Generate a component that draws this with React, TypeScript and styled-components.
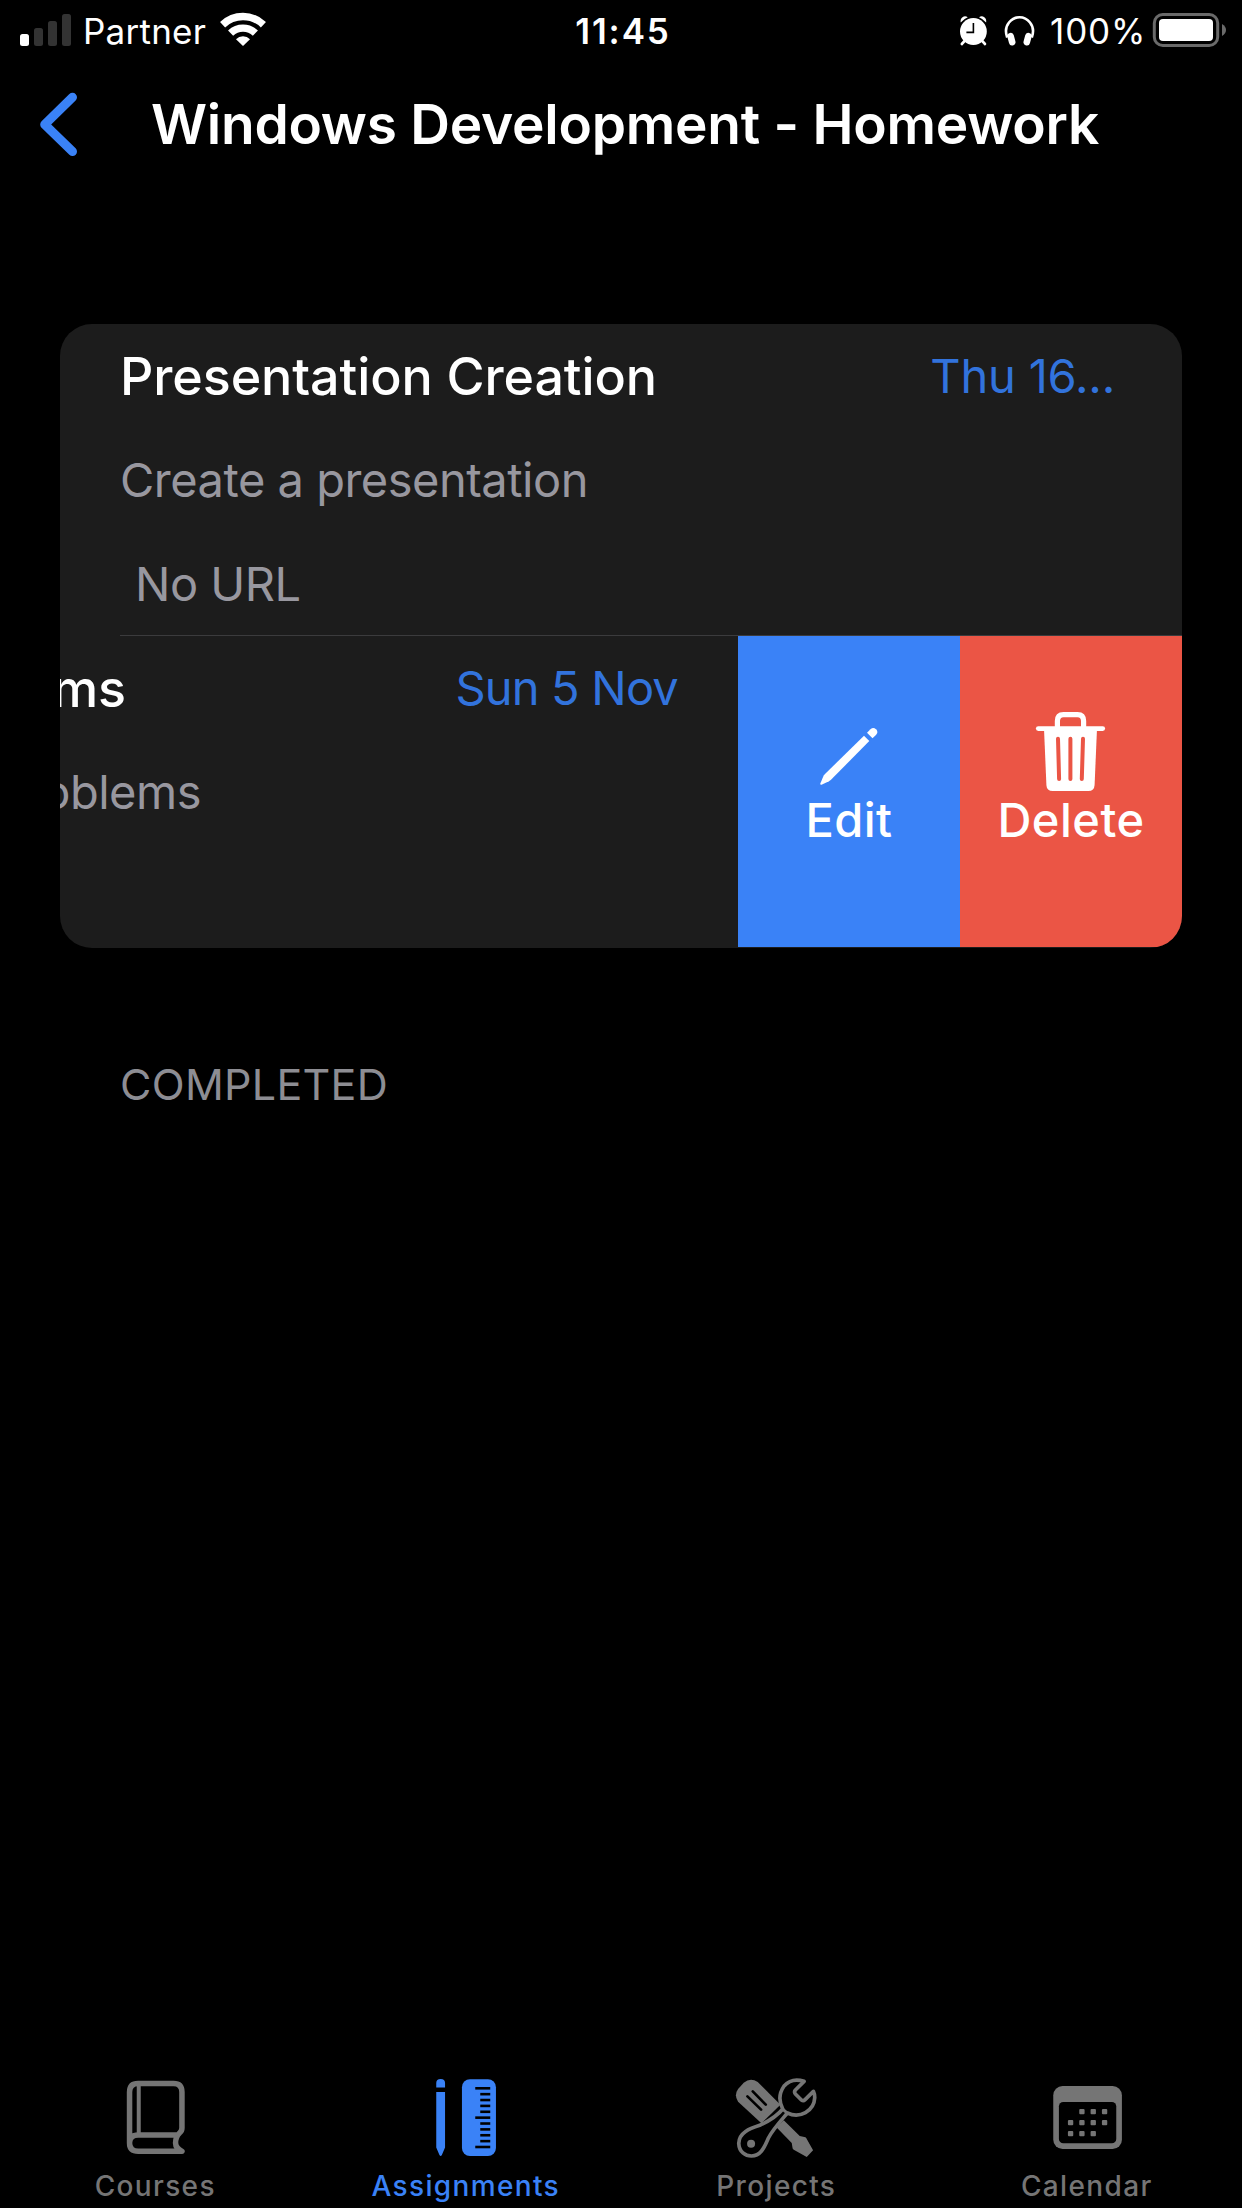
import React from "react";
import styled, { createGlobalStyle } from "styled-components";

const color = {
  blue: "#3a82f7",
  date: "#3273dc",
  red: "#eb5545",
  card: "#1c1c1c",
  line: "#3b3b3d",
  secondary: "#98979f",
  header: "#8d8d93",
  tab: "#757575",
};

const Global = createGlobalStyle`
  * { box-sizing: border-box; }
  html, body { margin: 0; background: #000; }
  body { font-family: Inter, "Liberation Sans", sans-serif; color: #fff; }
  svg { display: block; flex: none; }
`;

const Screen = styled.div`
  width: 1242px;
  height: 2208px;
  background: #000;
  display: flex;
  flex-direction: column;
  overflow: hidden;
`;

const StatusBar = styled.header`
  height: 62px;
  padding: 0 16px 0 20px;
  display: grid;
  grid-template-columns: 1fr 110px 1fr;
  font-size: 35px;
  line-height: 62px;
  white-space: nowrap;
`;

const StatusSide = styled.div<{ $end?: boolean }>`
  display: flex;
  justify-content: ${(p) => (p.$end ? "flex-end" : "flex-start")};
`;

const Carrier = styled.span`
  width: 136px;
  margin-left: 9px;
  letter-spacing: 0.25px;
`;

const Clock = styled.span`
  font-weight: 600;
  text-align: center;
  letter-spacing: 1.9px;
`;

const AlarmSlot = styled.span`
  display: flex;
  margin-right: 15px;
`;

const Percent = styled.span`
  width: 102px;
  margin-left: 14px;
  letter-spacing: 0.9px;
`;

const NavBar = styled.nav`
  height: 124px;
  padding-left: 34px;
  display: flex;
  align-items: center;
`;

const NavTitle = styled.h1`
  margin: 0 0 0 67px;
  font-size: 55px;
  line-height: 124px;
  font-weight: 600;
  letter-spacing: -0.25px;
  font-feature-settings: "calt" 0;
  white-space: nowrap;
`;

const Card = styled.section`
  margin: 138px 60px 0;
  height: 624px;
  border-radius: 32px;
  background: ${color.card};
  overflow: hidden;
`;

const Row = styled.article`
  height: 312px;
  padding: 0 67px 0 60px;
  display: grid;
  grid-template-rows: 104px 104px 104px;
  white-space: nowrap;
`;

const Divider = styled.div`
  height: 1px;
  margin-top: -1px;
  margin-left: 60px;
  background: ${color.line};
`;

const SwipedRow = styled.div`
  height: 312px;
  display: flex;
`;

const SwipedContent = styled.article`
  width: 678px;
  padding-right: 60px;
  display: grid;
  grid-template-rows: 104px 104px 104px;
  white-space: nowrap;
`;

const RowHead = styled.div`
  display: flex;
  justify-content: space-between;
`;

/* Holds the trailing end of a text whose start has slid past the card edge. */
const Clipped = styled.div<{ $width: number }>`
  width: ${(p) => p.$width}px;
  display: flex;
  justify-content: flex-end;
  overflow: hidden;
`;

const ItemTitle = styled.h2`
  margin: 0;
  font-size: 52px;
  line-height: 105px;
  font-weight: 500;
  letter-spacing: -0.1px;
`;

const ItemDate = styled.span<{ $tracking: number }>`
  font-size: 47px;
  line-height: 104px;
  letter-spacing: ${(p) => p.$tracking}px;
  color: ${color.date};
`;

const ItemText = styled.p<{ $indent?: number }>`
  margin: 0;
  padding-left: ${(p) => p.$indent ?? 0}px;
  font-size: 47px;
  line-height: 104px;
  letter-spacing: -0.5px;
  color: ${color.secondary};
`;

const Action = styled.button<{ $bg: string }>`
  width: 222px;
  height: 311px;
  padding: 76px 0 0;
  border: 0;
  background: ${(p) => p.$bg};
  color: #fff;
  font: 500 47px/56px Inter, "Liberation Sans", sans-serif;
  letter-spacing: 0.5px;
  display: flex;
  flex-direction: column;
  align-items: center;
`;

const SectionHeader = styled.h3`
  margin: 104px 0 0 120px;
  font-size: 43px;
  line-height: 64px;
  font-weight: 400;
  letter-spacing: 0.3px;
  color: ${color.header};
`;

const TabBar = styled.footer`
  margin-top: auto;
  height: 140px;
  padding-bottom: 4px;
  display: grid;
  grid-template-columns: repeat(4, 1fr);
`;

const Tab = styled.a<{ $active?: boolean }>`
  display: flex;
  flex-direction: column;
  align-items: center;
  font-size: 28px;
  line-height: 36px;
  font-weight: 500;
  letter-spacing: 1.35px;
  color: ${(p) => (p.$active ? color.blue : color.tab)};
`;

const Signal = () => (
  <svg width="54" height="62" viewBox="20 0 54 62">
    <rect x="20" y="34" width="9" height="12" rx="2.5" fill="#fff" />
    <rect x="34" y="28" width="9" height="18" rx="2.5" fill="#333" />
    <rect x="48" y="21" width="9" height="25" rx="2.5" fill="#333" />
    <rect x="62" y="14" width="9" height="32" rx="2.5" fill="#333" />
  </svg>
);

const Wifi = () => (
  <svg width="48" height="62" viewBox="219 0 48 62" fill="none" stroke="#fff" strokeWidth="7.4">
    <path d="M222.6 24.7A29.6 29.6 0 0 1 263.4 24.7" />
    <path d="M230.6 33.1A18 18 0 0 1 255.4 33.1" />
    <path d="M243 46L236 39.2A9.8 9.8 0 0 1 250 39.2Z" fill="#fff" stroke="none" />
  </svg>
);

const Alarm = () => (
  <svg width="30" height="62" viewBox="960 0 30 62">
    <circle cx="974.4" cy="31.5" r="13.4" fill="#fff" />
    <path d="M961.700 22.500Q961 19 963.500 17.200Q966 15.500 968.800 17.200Q964.500 19 961.700 22.500ZM987.100 22.500Q987.800 19 985.300 17.200Q982.800 15.500 980 17.200Q984.300 19 987.100 22.500Z" fill="#fff" />
    <path d="M966 40.500L962.800 44M982.800 40.500L986 44" stroke="#fff" strokeWidth="2.6" strokeLinecap="round" />
    <path d="M974.400 23V32.400H967.400" fill="none" stroke="#000" strokeWidth="1.6" />
  </svg>
);

const Headphones = () => (
  <svg width="32" height="62" viewBox="1005 0 32 62" fill="none" stroke="#fff">
    <path d="M1008.200 37.500C1006.200 32 1006.800 26.500 1010 22.500C1015.500 15.500 1025.500 15.500 1031 22.500C1034.200 26.500 1034.800 32 1032.800 37.500" strokeWidth="2.6" />
    <path d="M1011.600 36.200L1013.200 42.200M1029.400 36.200L1027.800 42.200" strokeWidth="6.600" strokeLinecap="round" />
  </svg>
);

const Battery = () => (
  <svg width="74" height="62" viewBox="1152 0 74 62">
    <rect x="1154.300" y="14.500" width="63.400" height="31" rx="8.500" fill="none" stroke="#6a6a6a" strokeWidth="3" />
    <rect x="1159" y="19" width="54" height="22" rx="4" fill="#fff" />
    <path d="M1222 24Q1226 26.500 1226 30T1222 36Z" fill="#6a6a6a" />
  </svg>
);

const Back = () => (
  <svg width="50" height="124" viewBox="34 62 50 124" fill="none" stroke={color.blue} strokeWidth="9" strokeLinecap="round" strokeLinejoin="round">
    <path d="M72.500 97.300L44.700 124.500L72.500 151.500" />
  </svg>
);

const PencilIcon = () => (
  <svg width="90" height="80" viewBox="804 712 90 80" fill="#fff">
    <path d="M820.300 783.500L823.700 775.600L825 774L864 735.700L869.300 741L831 779.800L829 781.200L821.500 784.700Q820 785 820.300 783.500Z" />
    <path d="M867 732.700L870.500 729.200Q873.300 726.600 876 729.300Q878.700 732 876.200 734.800L872.500 738.300Z" />
  </svg>
);

const TrashIcon = () => (
  <svg width="90" height="80" viewBox="1026 712 90 80">
    <path d="M1057.400 728V721Q1057.400 714.600 1063.500 714.600H1077.500Q1083.600 714.600 1083.600 721V728" fill="none" stroke="#fff" strokeWidth="5.200" />
    <path d="M1038.300 728.600H1102.700" stroke="#fff" strokeWidth="4.800" strokeLinecap="round" />
    <path d="M1044 728.500H1097L1094.600 785Q1094.300 791 1088.300 791H1052.700Q1046.700 791 1046.400 785Z" fill="#fff" />
    <path d="M1058 738.800L1059.100 779M1070.400 738.800V779M1083 738.800L1081.800 779" stroke={color.red} strokeWidth="4" strokeLinecap="round" />
  </svg>
);

const BookIcon = () => (
  <svg width="100" height="100" viewBox="105.250 2068 100 100" fill="none" stroke="currentColor" strokeWidth="5.500" strokeLinejoin="round">
    <path d="M129.800 2143V2092Q129.800 2083.400 138.300 2083.400H173.800Q182.200 2083.400 182.200 2092V2128Q182.200 2131 179.800 2133C176.500 2136 175.800 2139.500 175.800 2143C175.800 2147 178 2148.800 182.200 2151.300H138.500Q129.800 2151.300 129.800 2143Q129.800 2134.900 138.500 2134.900H178.500" />
    <path d="M139 2085V2134" strokeWidth="4" />
  </svg>
);

const ticks = Array.from({ length: 11 }, (_, i) => i);

const RulerIcon = () => (
  <svg width="100" height="100" viewBox="415.750 2068 100 100" fill="currentColor">
    <path d="M436 2087.500V2083Q436 2079 440.400 2079Q444.800 2079 444.800 2083V2087.500ZM436 2092H444.800V2147.500L441.600 2155Q440.400 2157 439.200 2155L436 2147.500Z" />
    <rect x="461.700" y="2079.200" width="34" height="76.800" rx="8" />
    {ticks.map((i) => (
      <path key={i} d={`M${i % 5 ? 480 : 475} ${2088.3 + i * 5.87}H490`} stroke="#000" strokeWidth="2.600" />
    ))}
  </svg>
);

const ToolsIcon = () => (
  <svg width="100" height="100" viewBox="198.750 54 300 300" fill="currentColor">
    <path d="M235 155Q222 135 235 117L252 98Q272 82 294 96L362 164L305 220Z" />
    <path d="M279 124L318 164M263 139L304 179" stroke="#000" strokeWidth="8" strokeLinecap="round" />
    <path d="M350 232L372 211L420 258L437 262Q440 264 441 267L460 301L441 321L402 299Q398 297 398 292L396 279Z" />
    <path
      d="M433 94Q396 82 373 108Q350 141 369 177C350 201 325 214 300 226C270 236 238 247 237 280C238 306 257 318 275 318C305 318 315 288 326 264C338 240 360 216 383 189C420 206 463 184 465 143Q465 132 461 124L436 149Q431 154 425 150L407 132Q402 126 407 120Z"
      fill="#000"
      stroke="currentColor"
      strokeWidth="11"
      strokeLinejoin="round"
    />
    <path d="M366 175L387 193" stroke="currentColor" strokeWidth="9" />
    <circle cx="274" cy="281" r="12" />
  </svg>
);

const days = [
  [305, 185], [339, 185], [373, 185],
  [271, 218], [305, 218], [339, 218], [373, 218],
  [271, 251], [305, 251], [339, 251],
];

const CalendarIcon = () => (
  <svg width="100" height="100" viewBox="170.250 54 300 300" fill="currentColor">
    <rect x="219" y="108" width="206" height="189" rx="28" />
    <rect x="236" y="156" width="172" height="124" rx="13" fill="#000" />
    {days.map(([x, y]) => (
      <rect key={`${x}-${y}`} x={x - 8} y={y - 8} width="16" height="16" rx="3" />
    ))}
  </svg>
);

export default function App() {
  return (
    <>
      <Global />
      <Screen>
        <StatusBar>
          <StatusSide>
            <Signal />
            <Carrier>Partner</Carrier>
            <Wifi />
          </StatusSide>
          <Clock>11:45</Clock>
          <StatusSide $end>
            <AlarmSlot>
              <Alarm />
            </AlarmSlot>
            <Headphones />
            <Percent>100%</Percent>
            <Battery />
          </StatusSide>
        </StatusBar>
        <NavBar>
          <Back />
          <NavTitle>Windows Development - Homework</NavTitle>
        </NavBar>
        <Card>
          <Row>
            <RowHead>
              <ItemTitle>Presentation Creation</ItemTitle>
              <ItemDate $tracking={-0.2}>Thu 16...</ItemDate>
            </RowHead>
            <ItemText>Create a presentation</ItemText>
            <ItemText $indent={15}>No URL</ItemText>
          </Row>
          <Divider />
          <SwipedRow>
            <SwipedContent>
              <RowHead>
                <Clipped $width={66}>
                  <ItemTitle>Problems</ItemTitle>
                </Clipped>
                <ItemDate $tracking={-0.8}>Sun 5 Nov</ItemDate>
              </RowHead>
              <Clipped $width={141}>
                <ItemText>Problems</ItemText>
              </Clipped>
            </SwipedContent>
            <Action $bg={color.blue}>
              <PencilIcon />
              Edit
            </Action>
            <Action $bg={color.red}>
              <TrashIcon />
              Delete
            </Action>
          </SwipedRow>
        </Card>
        <SectionHeader>COMPLETED</SectionHeader>
        <TabBar>
          <Tab>
            <BookIcon />
            Courses
          </Tab>
          <Tab $active>
            <RulerIcon />
            Assignments
          </Tab>
          <Tab>
            <ToolsIcon />
            Projects
          </Tab>
          <Tab>
            <CalendarIcon />
            Calendar
          </Tab>
        </TabBar>
      </Screen>
    </>
  );
}
